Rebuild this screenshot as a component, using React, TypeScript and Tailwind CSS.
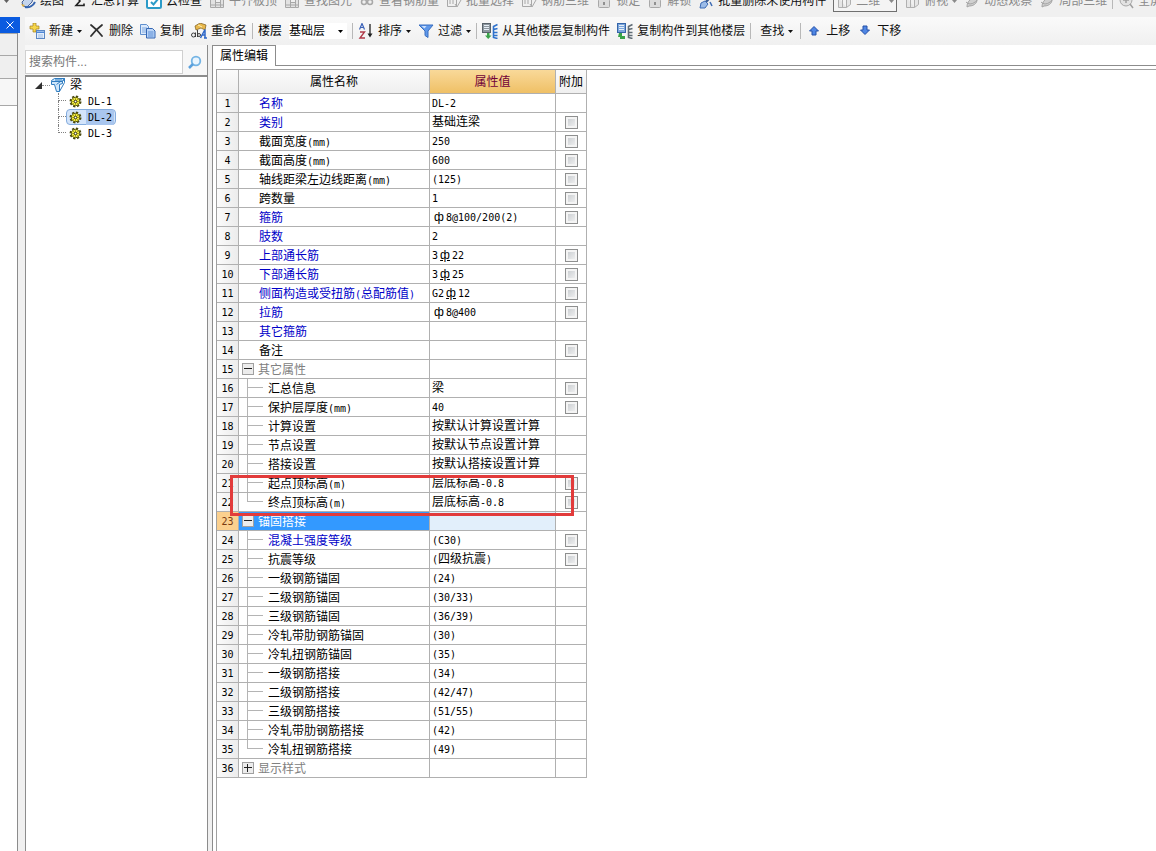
import React, { useState } from 'react';

interface PropertyRow {
  name: string;
  value?: string;
  check?: boolean;
  key?: boolean;
  group?: 'open' | 'closed';
  child?: 'mid' | 'last';
}

const ROWS: PropertyRow[] = [
  { name: '名称', value: 'DL-2', key: true },
  { name: '类别', value: '基础连梁', key: true, check: true },
  { name: '截面宽度(mm)', value: '250', check: true },
  { name: '截面高度(mm)', value: '600', check: true },
  { name: '轴线距梁左边线距离(mm)', value: '(125)', check: true },
  { name: '跨数量', value: '1', check: true },
  { name: '箍筋', value: 'ф8@100/200(2)', key: true, check: true },
  { name: '肢数', value: '2', key: true },
  { name: '上部通长筋', value: '3Ф22', key: true, check: true },
  { name: '下部通长筋', value: '3Ф25', key: true, check: true },
  { name: '侧面构造或受扭筋(总配筋值)', value: 'G2Ф12', key: true, check: true },
  { name: '拉筋', value: 'ф8@400', key: true, check: true },
  { name: '其它箍筋', key: true },
  { name: '备注', check: true },
  { name: '其它属性', group: 'open' },
  { name: '汇总信息', value: '梁', check: true, child: 'mid' },
  { name: '保护层厚度(mm)', value: '40', check: true, child: 'mid' },
  { name: '计算设置', value: '按默认计算设置计算', child: 'mid' },
  { name: '节点设置', value: '按默认节点设置计算', child: 'mid' },
  { name: '搭接设置', value: '按默认搭接设置计算', child: 'mid' },
  { name: '起点顶标高(m)', value: '层底标高-0.8', check: true, child: 'mid' },
  { name: '终点顶标高(m)', value: '层底标高-0.8', check: true, child: 'last' },
  { name: '锚固搭接', group: 'open' },
  { name: '混凝土强度等级', value: '(C30)', key: true, check: true, child: 'mid' },
  { name: '抗震等级', value: '(四级抗震)', check: true, child: 'mid' },
  { name: '一级钢筋锚固', value: '(24)', child: 'mid' },
  { name: '二级钢筋锚固', value: '(30/33)', child: 'mid' },
  { name: '三级钢筋锚固', value: '(36/39)', child: 'mid' },
  { name: '冷轧带肋钢筋锚固', value: '(30)', child: 'mid' },
  { name: '冷轧扭钢筋锚固', value: '(35)', child: 'mid' },
  { name: '一级钢筋搭接', value: '(34)', child: 'mid' },
  { name: '二级钢筋搭接', value: '(42/47)', child: 'mid' },
  { name: '三级钢筋搭接', value: '(51/55)', child: 'mid' },
  { name: '冷轧带肋钢筋搭接', value: '(42)', child: 'mid' },
  { name: '冷轧扭钢筋搭接', value: '(49)', child: 'last' },
  { name: '显示样式', group: 'closed' },
];

const SELECTED_ROW = 22;

// Latin runs go in a narrow mono face so that two of them take one Chinese character
const Mixed: React.FC<{ text: string }> = ({ text }) => (
  <>
    {text.split(/([\x20-\x7e]+|[фФ])/).filter(Boolean).map((run, i) => {
      if (run === 'ф') {
        return <span key={i} className="inline-block w-[14px] text-center">ф</span>;
      }
      // second-grade steel carries a bar under the symbol
      if (run === 'Ф') {
        return <span key={i} className="inline-block w-[14px] text-center underline underline-offset-1">ф</span>;
      }
      if (/^[\x20-\x7e]/.test(run)) {
        return <span key={i} className="font-['DejaVu_Sans_Mono',monospace] text-[10px]">{run}</span>;
      }
      return <span key={i}>{run}</span>;
    })}
  </>
);

const Icon: React.FC<{ children: React.ReactNode }> = ({ children }) => (
  <svg viewBox="0 0 16 16" className="w-4 h-4 shrink-0" fill="none" aria-hidden="true">
    {children}
  </svg>
);

const Caret: React.FC = () => (
  <svg viewBox="0 0 5 3" className="w-[5px] h-[3px] shrink-0" aria-hidden="true">
    <path d="M0 0h5L2.5 3z" fill="currentColor" />
  </svg>
);

const Separator: React.FC = () => <span className="w-px h-4 -mx-0.5 shrink-0 bg-[#b8b8b8]" />;

const NewIcon = () => (
  <Icon>
    <path d="M4 0h3v3h3v3H7v3H4V6H1V3h3z" fill="#f6d64a" stroke="#a08020" strokeWidth=".7" />
    <rect x="7.5" y="7.5" width="8" height="8" fill="#e4effc" stroke="#5a86c4" />
    <path d="M8 8.5h7v1.5H8z" fill="#4c86d8" />
    <path d="M9 12h5M9 14h5" stroke="#9dbbe6" />
  </Icon>
);

const DeleteIcon = () => (
  <Icon>
    <path d="M2 2c4 3 8 7 11 11M13 2C9 5 5 9 2 13" stroke="#303030" strokeWidth="1.8" strokeLinecap="round" />
  </Icon>
);

const CopyIcon = () => (
  <Icon>
    <path d="M.5 1.500h6l2 2v8h-8z" fill="#dbe9fb" stroke="#5f8fce" />
    <path d="M2 5h5M2 7h5M2 9h5" stroke="#7fa8df" />
    <path d="M6.500 5.500h6l2.500 2.500v7h-8.500z" fill="#bcd6f8" stroke="#3567b4" />
    <path d="M8 9h5.500M8 11h5.500M8 13h5.500" stroke="#5a8cd4" />
  </Icon>
);

const RenameIcon = () => (
  <Icon>
    <path d="M4 3l5-3 6 2-1 5-4-2-5 2z" fill="#e8b84c" stroke="#7a5a1c" strokeWidth=".7" />
    <path d="M7 2l4 2" stroke="#fff2b8" />
    <circle cx="2.500" cy="12" r="2" stroke="#404040" />
    <path d="M4.500 9.500V14M6.500 7v7" stroke="#404040" />
    <circle cx="8" cy="12" r="1.500" stroke="#404040" />
    <path d="M9.500 15L14 6.500V15M11 12h3M13 15h3" stroke="#2f68c8" strokeWidth="1.5" />
  </Icon>
);

const SortIcon = () => (
  <Icon>
    <path d="M1.500 6.500L4 .500l2.500 6M2.500 4.500h3" stroke="#3b62b8" strokeWidth="1.200" />
    <path d="M2 9h4.500L2 15h5" stroke="#b03a48" strokeWidth="1.400" />
    <path d="M12 1v12" stroke="#202020" strokeWidth="1.300" />
    <path d="M9.500 10.500h5L12 14.500z" fill="#202020" />
  </Icon>
);

const FilterIcon = () => (
  <Icon>
    <path d="M1 2h14l-5 6v6.500l-3-2V8z" fill="#5f98ea" stroke="#3a6fc0" />
    <path d="M3.500 3h5L6.500 5.500z" fill="#cfe2fc" />
  </Icon>
);

const FloorIcon: React.FC<{ reverse?: boolean }> = ({ reverse }) => (
  <Icon>
    <rect x=".5" y=".5" width="8" height="9" fill={reverse ? '#7aa5dc' : '#8d979f'} stroke={reverse ? '#3564a8' : '#59636b'} />
    <path d="M2 2.500h5M2 4.500h5M2 6.500h5" stroke="#e6eef6" />
    <path
      d={reverse ? 'M2 10h3v3h3v3H3v-2H1z' : 'M3 12.500h2V10h2.500v2.500H9.500L6.200 16z'}
      fill="#3aa34a"
    />
    <path
      d="M15.500 1.500l-4 2v11l4 1M11.500 6.500l4-1M11.500 9.500h4M11.500 12.500h4"
      stroke={reverse ? '#5f6b75' : '#2f72cc'}
      strokeWidth="1.600"
    />
  </Icon>
);

const ArrowIcon: React.FC<{ down?: boolean }> = ({ down }) => (
  <Icon>
    <path
      d={down ? 'M6 3h4v4h2.500L8 11.500 3.500 7H6z' : 'M6 12h4V8h2.500L8 3.500 3.500 8H6z'}
      fill="#4f86e4"
      stroke="#2450a8"
    />
  </Icon>
);

const PaintIcon = () => (
  <Icon>
    <path d="M2 9l6-6 5 2-1 4-5 5-4-1z" fill="#c4d4ec" stroke="#4a6496" />
    <path d="M5 14c4 1 8-1 10-5" stroke="#3564b0" strokeWidth="2" />
    <path d="M1 11l4 1-2 2z" fill="#e0b040" />
  </Icon>
);

const SumIcon = () => (
  <Icon>
    <path d="M13 5V3H5l4 5-4 4.500h8v-2" stroke="#202020" strokeWidth="1.600" />
  </Icon>
);

const CloudCheckIcon = () => (
  <Icon>
    <rect x="1" y="1" width="14" height="14" rx="1.500" fill="#fff" stroke="#2c9bc8" strokeWidth="2" />
    <path d="M5 9l2.500 2.500L12 6" stroke="#2c9bc8" strokeWidth="2" />
  </Icon>
);

const BlocksIcon = () => (
  <Icon>
    <path d="M1.500 4.500h5v10h-5zM6.500 9.500h5v5h-5zM11.500 6.500h3v8h-3zM2 12h12" fill="#e2e2e2" stroke="#a8a8a8" />
  </Icon>
);

const GlassesIcon = () => (
  <Icon>
    <circle cx="5" cy="9" r="2.500" stroke="#a8a8a8" strokeWidth="1.500" />
    <circle cx="11" cy="9" r="2.500" stroke="#a8a8a8" strokeWidth="1.500" />
  </Icon>
);

const SelectIcon = () => (
  <Icon>
    <path d="M1.500 4.500h9v9h-9zM4 7v4M7 7v4M9 11l2 3 4-7" stroke="#a8a8a8" />
  </Icon>
);

const LockIcon = () => (
  <Icon>
    <rect x="2.500" y="6.500" width="11" height="8" rx="1" fill="#dcdcdc" stroke="#a8a8a8" />
    <path d="M8 9v3" stroke="#909090" strokeWidth="2" />
  </Icon>
);

const BrushIcon = () => (
  <Icon>
    <path d="M13 3L8 9" stroke="#3f5f94" strokeWidth="2.500" />
    <path d="M3 10l4-2 3 3-3 4H2z" fill="#9cbce8" stroke="#3f6cb4" />
    <path d="M12 9l2 4" stroke="#3f6cb4" strokeWidth="1.500" />
  </Icon>
);

const CubeIcon = () => (
  <Icon>
    <path d="M2.500 4.500h8v10h-8zM10.500 14.500l4-3v-9h-8l-4 2M6.500 4.500v10" fill="#e6e6e6" stroke="#b0b0b0" />
  </Icon>
);

const OrbitIcon = () => (
  <Icon>
    <path d="M3 14c0-6 4-9 10-10 1 5-2 9-8 9z" fill="#d0d0d0" stroke="#a4a4a4" />
    <path d="M2 9c4 4 9 1 12-3" stroke="#a4a4a4" />
  </Icon>
);

const ZoomIcon = () => (
  <Icon>
    <circle cx="8" cy="7" r="6" fill="#e2e2e2" stroke="#a8a8a8" />
    <path d="M12 11l3 4M5 7h6M8 4v6" stroke="#a0a0a0" strokeWidth="1.500" />
  </Icon>
);

interface ToolProps {
  icon?: React.ReactNode;
  label: string;
  menu?: boolean;
  dim?: boolean;
  wide?: boolean;
}

const Tool: React.FC<ToolProps> = ({ icon, label, menu, dim, wide }) => (
  <button
    type="button"
    className={`flex items-center gap-1 shrink-0 whitespace-nowrap ${dim ? 'text-[#8a8a8a]' : 'text-[#101010]'} ${
      wide ? 'pl-1 pr-0.5' : ''
    }`}
  >
    {icon}
    <span>{label}</span>
    {menu && <Caret />}
  </button>
);

const MainToolbar: React.FC = () => (
  <div className="h-[17px] overflow-hidden bg-[#f0f0f0]">
    <div className="-mt-[10px] h-[22px] flex items-center gap-[7px] pl-1">
      <span className="w-[9px] flex shrink-0 text-[#606060]"><Caret /></span>
      <Tool icon={<PaintIcon />} label="绘图" />
      <Tool icon={<SumIcon />} label="汇总计算" />
      <Tool icon={<CloudCheckIcon />} label="云检查" />
      <Tool icon={<BlocksIcon />} label="平齐板顶" dim />
      <Tool icon={<BlocksIcon />} label="查找图元" dim />
      <Tool icon={<GlassesIcon />} label="查看钢筋量" dim />
      <Tool icon={<SelectIcon />} label="批量选择" dim />
      <Tool icon={<SelectIcon />} label="钢筋三维" dim />
      <Tool icon={<LockIcon />} label="锁定" dim />
      <Tool icon={<LockIcon />} label="解锁" dim />
      <Tool icon={<BrushIcon />} label="批量删除未使用构件" />
      <label className="flex items-center gap-1 shrink-0 w-16 h-[22px] px-0.5 border border-[#707070] bg-[#f4f4f4] text-[#8a8a8a]">
        <CubeIcon />
        <select aria-label="视图" className="appearance-none flex-1 min-w-0 bg-transparent outline-none">
          <option>二维</option>
        </select>
        <Caret />
      </label>
      <Tool icon={<CubeIcon />} label="俯视" menu dim />
      <Tool icon={<OrbitIcon />} label="动态观察" dim />
      <Tool icon={<OrbitIcon />} label="局部三维" dim />
      <Separator />
      <Tool icon={<ZoomIcon />} label="全屏" dim />
    </div>
  </div>
);

const ComponentToolbar: React.FC = () => (
  <div className="h-7 shrink-0 flex items-center gap-[7px] pl-1 overflow-hidden bg-gradient-to-b from-[#fafafa] to-[#f0f0f0]">
    <Tool icon={<NewIcon />} label="新建" menu />
    <Tool icon={<DeleteIcon />} label="删除" />
    <Tool icon={<CopyIcon />} label="复制" />
    <Tool icon={<RenameIcon />} label="重命名" />
    <Separator />
    <label htmlFor="floor" className="shrink-0">楼层</label>
    <span className="flex items-center shrink-0 w-[58px] bg-white pr-1">
      <select id="floor" className="appearance-none flex-1 min-w-0 bg-transparent outline-none">
        <option>基础层</option>
      </select>
      <Caret />
    </span>
    <Separator />
    <Tool icon={<SortIcon />} label="排序" menu />
    <Tool icon={<FilterIcon />} label="过滤" menu />
    <Separator />
    <Tool icon={<FloorIcon />} label="从其他楼层复制构件" />
    <Tool icon={<FloorIcon reverse />} label="复制构件到其他楼层" />
    <Separator />
    <Tool label="查找" menu wide />
    <Separator />
    <Tool icon={<ArrowIcon />} label="上移" />
    <Tool icon={<ArrowIcon down />} label="下移" />
  </div>
);

const BeamIcon = () => (
  <Icon>
    <path d="M1.500 3.500l3-2h10l-2 3h-11zM1.500 4.500v3h3l2 7h3v-7l3-1v-2" fill="#cfe6fa" stroke="#2f7cc0" />
    <path d="M12.500 4.500l2-3v4l-5 9M6.500 7.500l4-3M5 3h7" stroke="#2f7cc0" />
  </Icon>
);

const GearIcon = () => (
  <svg viewBox="0 0 13 13" className="w-[13px] h-[13px] shrink-0" fill="none" aria-hidden="true">
    <circle cx="6.500" cy="6.500" r="5" stroke="#4a4a10" strokeWidth="2" strokeDasharray="2.200 1.700" />
    <circle cx="6.500" cy="6.500" r="4.200" fill="#f4ee3c" stroke="#5c5a10" />
    <path d="M6.500 2.500v8M2.500 6.500h8M4 4l5 5M9 4L4 9" stroke="#77741a" strokeWidth=".6" />
    <circle cx="6.500" cy="6.500" r="1.300" fill="#fff" stroke="#3c3a08" />
  </svg>
);

const ComponentTree: React.FC = () => {
  const [active, setActive] = useState('DL-2');
  const items = ['DL-1', 'DL-2', 'DL-3'];

  return (
    <div className="w-[183px] shrink-0 flex flex-col border-r border-[#8c8c8c] bg-white">
      <div className="flex items-center h-[30px] pt-1 bg-[#f7f7f7]">
        <input
          type="text"
          aria-label="搜索构件"
          placeholder="搜索构件..."
          className="w-[158px] h-6 px-[3px] border border-[#d0d0d0] bg-white outline-none placeholder:text-[#777]"
        />
        <button type="button" aria-label="搜索" className="flex-1 flex justify-center">
          <Icon>
            <circle cx="9" cy="7" r="4.300" fill="#eaf5fe" stroke="#74b4e4" strokeWidth="1.800" />
            <path d="M6 10l-4 4" stroke="#5aa0dc" strokeWidth="2.500" />
          </Icon>
        </button>
      </div>
      <div className="flex-1 border-t-2 border-l border-[#8c8c8c]">
        <div className="flex items-center h-4 pl-[9px]">
          <svg viewBox="0 0 7 7" className="w-[7px] h-[7px]" aria-hidden="true">
            <path d="M7 0v7H0z" fill="#303030" />
          </svg>
          <span className="w-2 border-t border-dotted border-[#909090]" />
          <BeamIcon />
          <span className="pl-1">梁</span>
        </div>
        <ul className="pl-8">
          {items.map((item, i) => (
            <li key={item} className="flex h-4">
              <span className="w-2 flex flex-col">
                <span className="h-2 border-l border-b border-dotted border-[#808080]" />
                {i < items.length - 1 && <span className="h-2 border-l border-dotted border-[#808080]" />}
              </span>
              <button
                type="button"
                onClick={() => setActive(item)}
                className={`flex items-center gap-1 h-4 pl-0.5 pr-px rounded-sm border ${
                  active === item ? 'border-[#84acdd] bg-[#d3e4fa]' : 'border-transparent'
                }`}
              >
                <GearIcon />
                <span className={`px-0.5 leading-[14px] ${active === item ? 'bg-[#a9c6ee]' : ''}`}>
                  <Mixed text={item} />
                </span>
              </button>
            </li>
          ))}
        </ul>
      </div>
    </div>
  );
};

const NameCell: React.FC<{ row: PropertyRow; selected: boolean }> = ({ row, selected }) => {
  if (row.group) {
    return (
      <div className={`flex h-[18px] pl-[3px] gap-1 leading-5 ${selected ? 'text-white' : 'text-[#808080]'}`}>
        <button
          type="button"
          aria-label={row.group === 'open' ? '折叠' : '展开'}
          className="w-3 h-3 self-center border border-[#a0a0a0] bg-[#ececec]"
        >
          <svg viewBox="0 0 10 10" className="w-[10px] h-[10px]" aria-hidden="true">
            <path
              d={row.group === 'open' ? 'M1 4.5h8' : 'M1 4.5h8M4.5 1v8'}
              stroke="#202020"
            />
          </svg>
        </button>
        <span>{row.name}</span>
      </div>
    );
  }
  if (row.child) {
    return (
      <div className="flex h-[18px] pl-2 leading-5">
        <span className="w-4 mr-[5px] flex flex-col">
          <span className="h-[9px] border-l border-b border-[#b4b4b4]" />
          {row.child === 'mid' && <span className="h-[9px] border-l border-[#b4b4b4]" />}
        </span>
        <span className={row.key ? 'text-[#0000c8]' : ''}><Mixed text={row.name} /></span>
      </div>
    );
  }
  return (
    <div className={`h-[18px] pl-5 leading-5 ${row.key ? 'text-[#0000c8]' : ''}`}>
      <Mixed text={row.name} />
    </div>
  );
};

const PropertyTable: React.FC = () => (
  <div className="relative w-[370px]">
    <table className="w-full table-fixed border-separate border-spacing-0 leading-[18px] whitespace-nowrap">
      <colgroup>
        <col className="w-[22px]" />
        <col className="w-[191px]" />
        <col className="w-[126px]" />
        <col className="w-[31px]" />
      </colgroup>
      <thead>
        <tr className="h-6">
          <th aria-label="序号" className="p-0 border-r border-b border-[#b0b0b0] bg-gradient-to-b from-[#fbfbfb] to-[#efefef]" />
          <th className="p-0 font-normal border-r border-b border-[#b0b0b0] bg-gradient-to-b from-[#fbfbfb] to-[#efefef]">属性名称</th>
          <th className="p-0 font-normal border-r border-b border-[#b0b0b0] bg-gradient-to-b from-[#f9d999] to-[#efc065] text-[#700038]">属性值</th>
          <th className="p-0 font-normal border-r border-b border-[#b0b0b0] bg-gradient-to-b from-[#fbfbfb] to-[#efefef]">附加</th>
        </tr>
      </thead>
      <tbody>
        {ROWS.map((row, i) => {
          const selected = i === SELECTED_ROW;
          return (
            <tr key={i}>
              <td
                className={`p-0 text-center border-r border-b border-[#b0b0b0] ${
                  selected ? 'bg-[#fbd08e] text-[#7a3a10]' : 'bg-gradient-to-r from-[#fbfbfb] to-[#ececec]'
                }`}
              >
                <div className="h-[18px]"><Mixed text={String(i + 1)} /></div>
              </td>
              <td className={`p-0 border-r border-b border-[#b0b0b0] ${selected ? 'bg-[#3399ff]' : ''}`}>
                <NameCell row={row} selected={selected} />
              </td>
              <td className={`p-0 pl-0.5 border-r border-b border-[#b0b0b0] ${selected ? 'bg-[#e2effb]' : ''}`}>
                <div className="h-[18px]">{row.value && <Mixed text={row.value} />}</div>
              </td>
              <td className="p-0 border-r border-b border-[#b0b0b0]">
                {row.check && (
                  <input
                    type="checkbox"
                    aria-label={`附加 ${row.name}`}
                    className="appearance-none block mx-auto w-[13px] h-[13px] border border-[#8e8f8f] bg-gradient-to-br from-[#c4c8cc] to-[#f6f6f6] shadow-[inset_0_0_0_2px_#f4f4f4] checked:bg-[#3399ff]"
                  />
                )}
              </td>
            </tr>
          );
        })}
      </tbody>
    </table>
    {/* marks the start / end elevation rows */}
    <div className="absolute left-[13px] top-[405px] w-[344px] h-[41px] border-[3px] border-[#e23b3b] pointer-events-none" />
  </div>
);

const SideStrip: React.FC = () => (
  <aside className="w-[25px] shrink-0 flex flex-col">
    <div className="w-5 h-4 flex items-center justify-center bg-[#0a5be0]">
      <button type="button" aria-label="关闭" className="w-5 h-4 flex items-center justify-center">
        <svg viewBox="0 0 8 8" className="w-2 h-2" aria-hidden="true">
          <path d="M.5.5l7 7M7.500.5l-7 7" stroke="#fff" />
        </svg>
      </button>
    </div>
    <div className="flex-1 w-[18px] flex flex-col border-r border-[#8c8c8c] bg-white">
      <div className="h-[23px] border-b border-t border-[#a8a8a8] bg-[#efefef]" />
      <div className="h-[23px] border-b border-[#a8a8a8] bg-[#efefef]" />
      <div className="h-[27px] border-b border-[#a8a8a8] bg-[#f7f7f7]" />
    </div>
  </aside>
);

const App: React.FC = () => (
  <div className="min-h-screen flex flex-col overflow-hidden bg-[#f0f0f0] text-black text-xs font-['Liberation_Sans','Noto_Sans_CJK_SC',sans-serif]">
    <MainToolbar />
    <div className="flex-1 flex">
      <SideStrip />
      <div className="flex-1 min-w-0 flex flex-col">
        <ComponentToolbar />
        <div className="flex-1 flex">
          <ComponentTree />
          <div className="w-1 shrink-0 bg-[#f0f0f0]" />
          <section className="flex-1 min-w-0 flex flex-col border-l border-[#8c8c8c] bg-white">
            <div className="flex h-[21px]" role="tablist">
              <button type="button" role="tab" aria-selected="true" className="px-[7px] border-t border-r border-[#8c8c8c]">
                属性编辑
              </button>
              <span className="flex-1 border-b border-[#8c8c8c]" />
            </div>
            <div className="flex-1 flex flex-col pt-[3px] pl-[3px]">
              <div className="flex-1 border-t border-l border-[#a0a0a0]">
                <PropertyTable />
              </div>
            </div>
          </section>
        </div>
      </div>
    </div>
  </div>
);

export default App;
